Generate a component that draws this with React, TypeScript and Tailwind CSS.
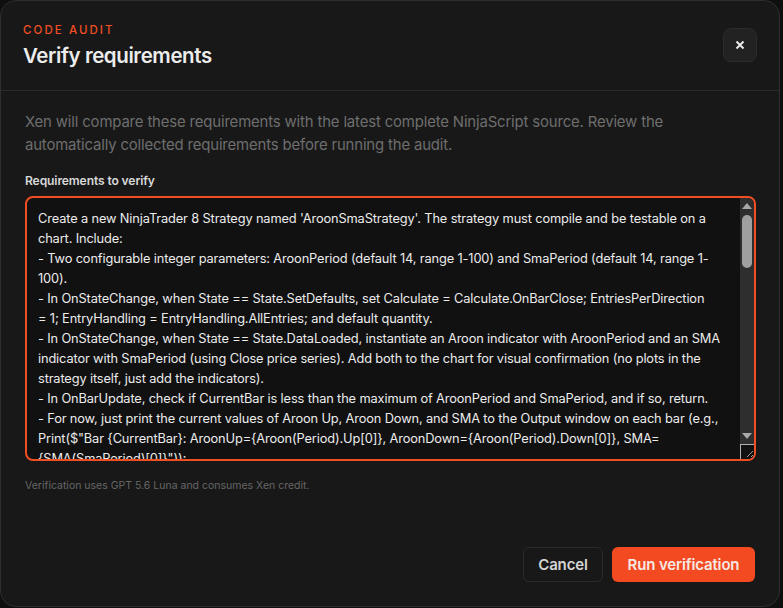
import React from "react";
const text = `Create a new NinjaTrader 8 Strategy named 'AroonSmaStrategy'. The strategy must compile and be testable on a
chart. Include:
- Two configurable integer parameters: AroonPeriod (default 14, range 1-100) and SmaPeriod (default 14, range 1-
100).
- In OnStateChange, when State == State.SetDefaults, set Calculate = Calculate.OnBarClose; EntriesPerDirection
= 1; EntryHandling = EntryHandling.AllEntries; and default quantity.
- In OnStateChange, when State == State.DataLoaded, instantiate an Aroon indicator with AroonPeriod and an SMA
indicator with SmaPeriod (using Close price series). Add both to the chart for visual confirmation (no plots in the
strategy itself, just add the indicators).
- In OnBarUpdate, check if CurrentBar is less than the maximum of AroonPeriod and SmaPeriod, and if so, return.
- For now, just print the current values of Aroon Up, Aroon Down, and SMA to the Output window on each bar (e.g.,
Print($"Bar {CurrentBar}: AroonUp={Aroon(Period).Up[0]}, AroonDown={Aroon(Period).Down[0]}, SMA=
{SMA(SmaPeriod)[0]}"));`;
export default function App() {
  return (
    <div className="h-[608px] w-[783px] overflow-hidden bg-[#0f0f0f] font-['Inter',sans-serif]">
      <div className="flex h-[607px] w-[780px] flex-col rounded-2xl border border-[#2e2e2e] bg-[#181818]">
        <header className="flex h-[90px] shrink-0 items-start justify-between border-b border-[#2b2b2b] pl-[22px] pr-[22px] pt-[22px]">
          <div>
            <p className="text-[11.5px] leading-[14px] font-medium tracking-[0.18em] text-[#f04e23]">CODE AUDIT</p>
            <h1 className="mt-[4px] text-[20.5px] leading-[30px] font-semibold tracking-[-0.02em] text-[#ececec]">Verify requirements</h1>
          </div>
          <button className="mt-[5px] flex h-[34px] w-[34px] items-center justify-center rounded-lg border border-[#2c2c2c] bg-[#222222] text-[#e8e8e8]">
            <svg width="10" height="10" viewBox="0 0 10 10" fill="none" stroke="currentColor" strokeWidth="2"><path d="M1.5 1.5l7 7M8.5 1.5l-7 7" /></svg>
          </button>
        </header>
        <main className="flex flex-1 flex-col px-6">
          <p className="mt-[20px] w-[690px] text-[14.9px] leading-[23px] tracking-[-0.01em] text-[#6e6e6e]">Xen will compare these requirements with the latest complete NinjaScript source. Review the automatically collected requirements before running the audit.</p>
          <label className="mt-[16px] text-[12.1px] leading-[16px] font-semibold tracking-[-0.01em] text-[#d8d8d8]">Requirements to verify</label>
          <div className="mt-[7px] flex h-[265px] w-[731px] overflow-hidden rounded-lg border-2 border-[#f04e23] bg-[#111111]">
            <textarea readOnly value={text} wrap="off" className="h-full flex-1 resize-none overflow-hidden bg-transparent pl-[11px] pt-[11px] text-[12.8px] leading-[20px] tracking-[-0.01em] text-[#ececec] outline-none" />
            <div className="flex w-[14px] shrink-0 flex-col items-center bg-[#2e2e2e]">
              <svg className="mt-[5px] shrink-0" width="10" height="6" viewBox="0 0 10 6"><path d="M5 0l5 6H0z" fill="#a8a8a8" /></svg>
              <div className="mt-[6px] h-[53px] w-[10px] shrink-0 rounded-full bg-[#a0a0a0]" />
              <svg className="mt-auto shrink-0" width="10" height="6" viewBox="0 0 10 6"><path d="M0 0h10L5 6z" fill="#a8a8a8" /></svg>
              <div className="mt-[5px] h-[15px] w-[14px] shrink-0 border-t border-l border-[#b0b0b0] bg-[#111111]">
                <svg width="13" height="14" viewBox="0 0 13 14" stroke="#9a9a9a" strokeWidth="1"><path d="M6 12l6-6M10 12l2-2" /></svg>
              </div>
            </div>
          </div>
          <p className="mt-[18px] text-[10.5px] leading-[14px] text-[#666666]">Verification uses GPT 5.6 Luna and consumes Xen credit.</p>
          <footer className="mt-auto mb-[24px] flex justify-end gap-[9px]">
            <button className="h-[35px] w-[80px] rounded-md border border-[#2b2b2b] pt-px text-[15px] font-semibold tracking-[-0.01em] text-[#d4d4d4]">Cancel</button>
            <button className="h-[35px] w-[143px] rounded-md bg-[#f44a22] pt-px text-[15px] font-semibold tracking-[-0.01em] text-[#f5e9e4]">Run verification</button>
          </footer>
        </main>
      </div>
    </div>
  );
}
